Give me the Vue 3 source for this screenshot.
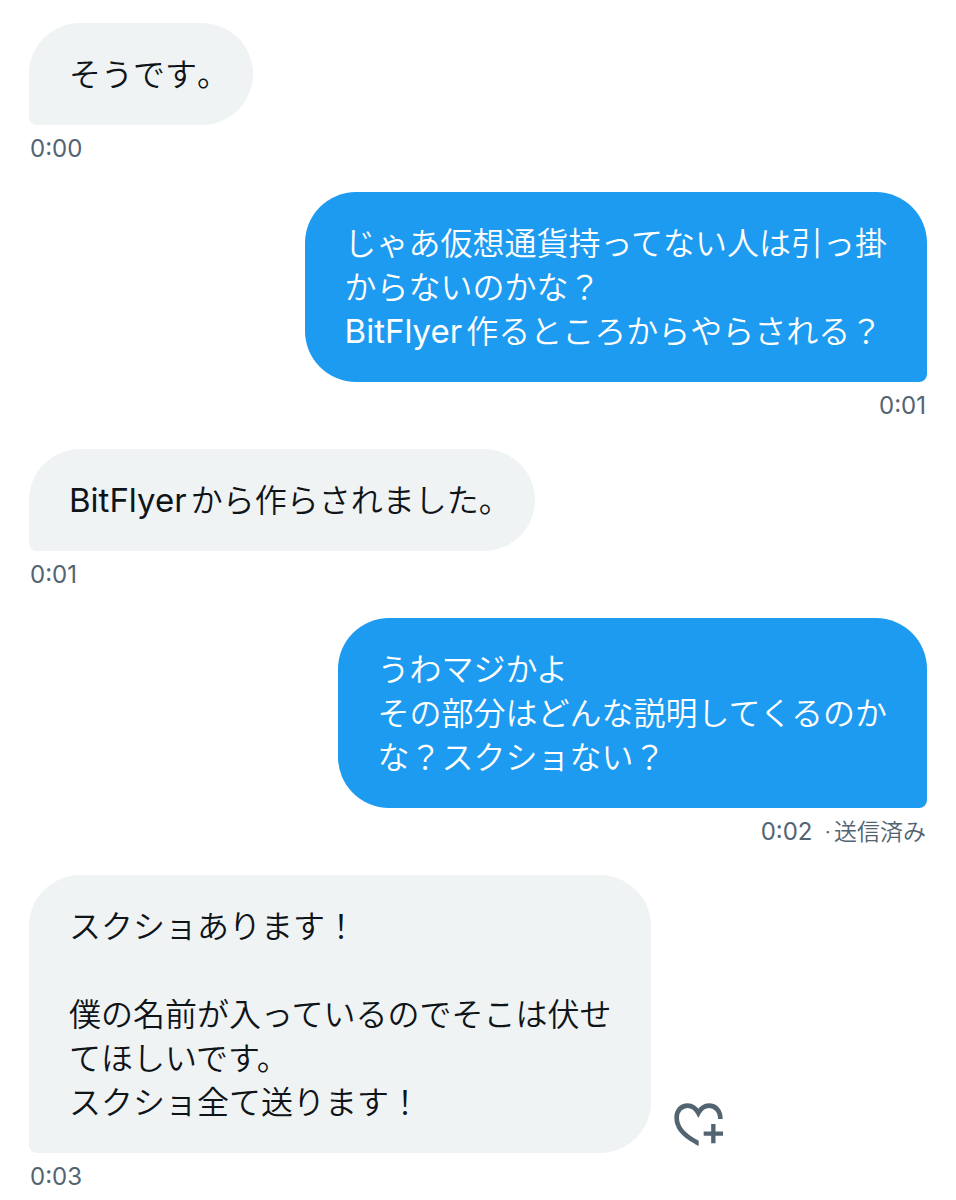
<script setup>
// Splits a message into runs so that Latin words and a closing full stop can be styled on their own.
const toRuns = (text) =>
  text
    .split(/([A-Za-z]+|。$)/)
    .filter(Boolean)
    .map((value) => ({
      value,
      kind: value === '。' ? 'stop' : /^[A-Za-z]+$/.test(value) ? 'latin' : 'kana',
    }))

const messages = [
  { id: 1, side: 'received', text: 'そうです。', time: '0:00' },
  {
    id: 2,
    side: 'sent',
    text: 'じゃあ仮想通貨持ってない人は引っ掛\nからないのかな？\nBitFlyer作るところからやらされる？',
    time: '0:01',
  },
  { id: 3, side: 'received', text: 'BitFlyerから作らされました。', time: '0:01' },
  {
    id: 4,
    side: 'sent',
    text: 'うわマジかよ\nその部分はどんな説明してくるのか\nな？スクショない？',
    time: '0:02',
    status: '送信済み',
  },
  {
    id: 5,
    side: 'received',
    text: 'スクショあります！\n\n僕の名前が入っているのでそこは伏せ\nてほしいです。\nスクショ全て送ります！',
    time: '0:03',
    reactable: true,
  },
]
</script>

<template>
  <main class="thread" lang="ja">
    <article v-for="m in messages" :key="m.id" class="message" :class="m.side">
      <div class="row">
        <p class="bubble"><span v-for="(run, i) in toRuns(m.text)" :key="i" :class="run.kind">{{ run.value }}</span></p>
        <button v-if="m.reactable" class="react" type="button" aria-label="リアクションを追加">
          <svg viewBox="42 40 147 129" aria-hidden="true">
            <path
              d="M181 88C181 62 166 48 147 48C133 48 122 57 115 70C108 57 97 48 83 48C64 48 50 62 50 84C50 112 73 138 109 157"
              fill="none"
              stroke="currentColor"
              stroke-width="14"
            />
            <path d="M111 150L116 153V169L104 163Z" fill="currentColor" />
            <path d="M160 103V161M131 132H189" fill="none" stroke="currentColor" stroke-width="13" />
          </svg>
        </button>
      </div>
      <footer class="meta">
        <time>{{ m.time }}</time>
        <span v-if="m.status" class="status"><span class="dot">·</span>{{ m.status }}</span>
      </footer>
    </article>
  </main>
</template>

<style>
body {
  background: #fff;
}
</style>

<style scoped>
.thread {
  display: flex;
  flex-direction: column;
  gap: 27px;
  padding: 23px 29px 0 29px;
  font-family: Inter, "Noto Sans CJK JP", sans-serif;
}
.message {
  display: flex;
  flex-direction: column;
  align-items: flex-start;
}
.message.sent {
  align-items: flex-end;
}
.row {
  display: flex;
  align-items: flex-end;
}
.bubble {
  margin: 0;
  padding: 30px 40px 28px;
  border-radius: 51px 51px 51px 8px;
  background: #eff3f4;
  color: #0f1419;
  font-size: 32px;
  font-weight: 350;
  line-height: 44px;
  white-space: pre-wrap;
  text-autospace: normal;
}
.sent .bubble {
  border-radius: 51px 51px 8px 51px;
  background: #1d9bf0;
  color: #fff;
}
.bubble .latin {
  font-size: 33px;
  font-weight: 400;
  line-height: 1;
}
.stop {
  font-feature-settings: "halt";
}
.react {
  margin: 0 0 7px 23px;
  padding: 0;
  border: 0;
  background: none;
  color: #536471;
  cursor: pointer;
}
.react svg {
  display: block;
  width: 49px;
  height: 43px;
}
.meta {
  display: flex;
  align-items: center;
  gap: 12px;
  padding: 8px 1px 0;
  color: #536471;
  font-size: 24px;
  line-height: 32px;
}
.status {
  font-size: 23px;
  font-weight: 350;
}
.dot {
  margin-right: 3px;
}
</style>
